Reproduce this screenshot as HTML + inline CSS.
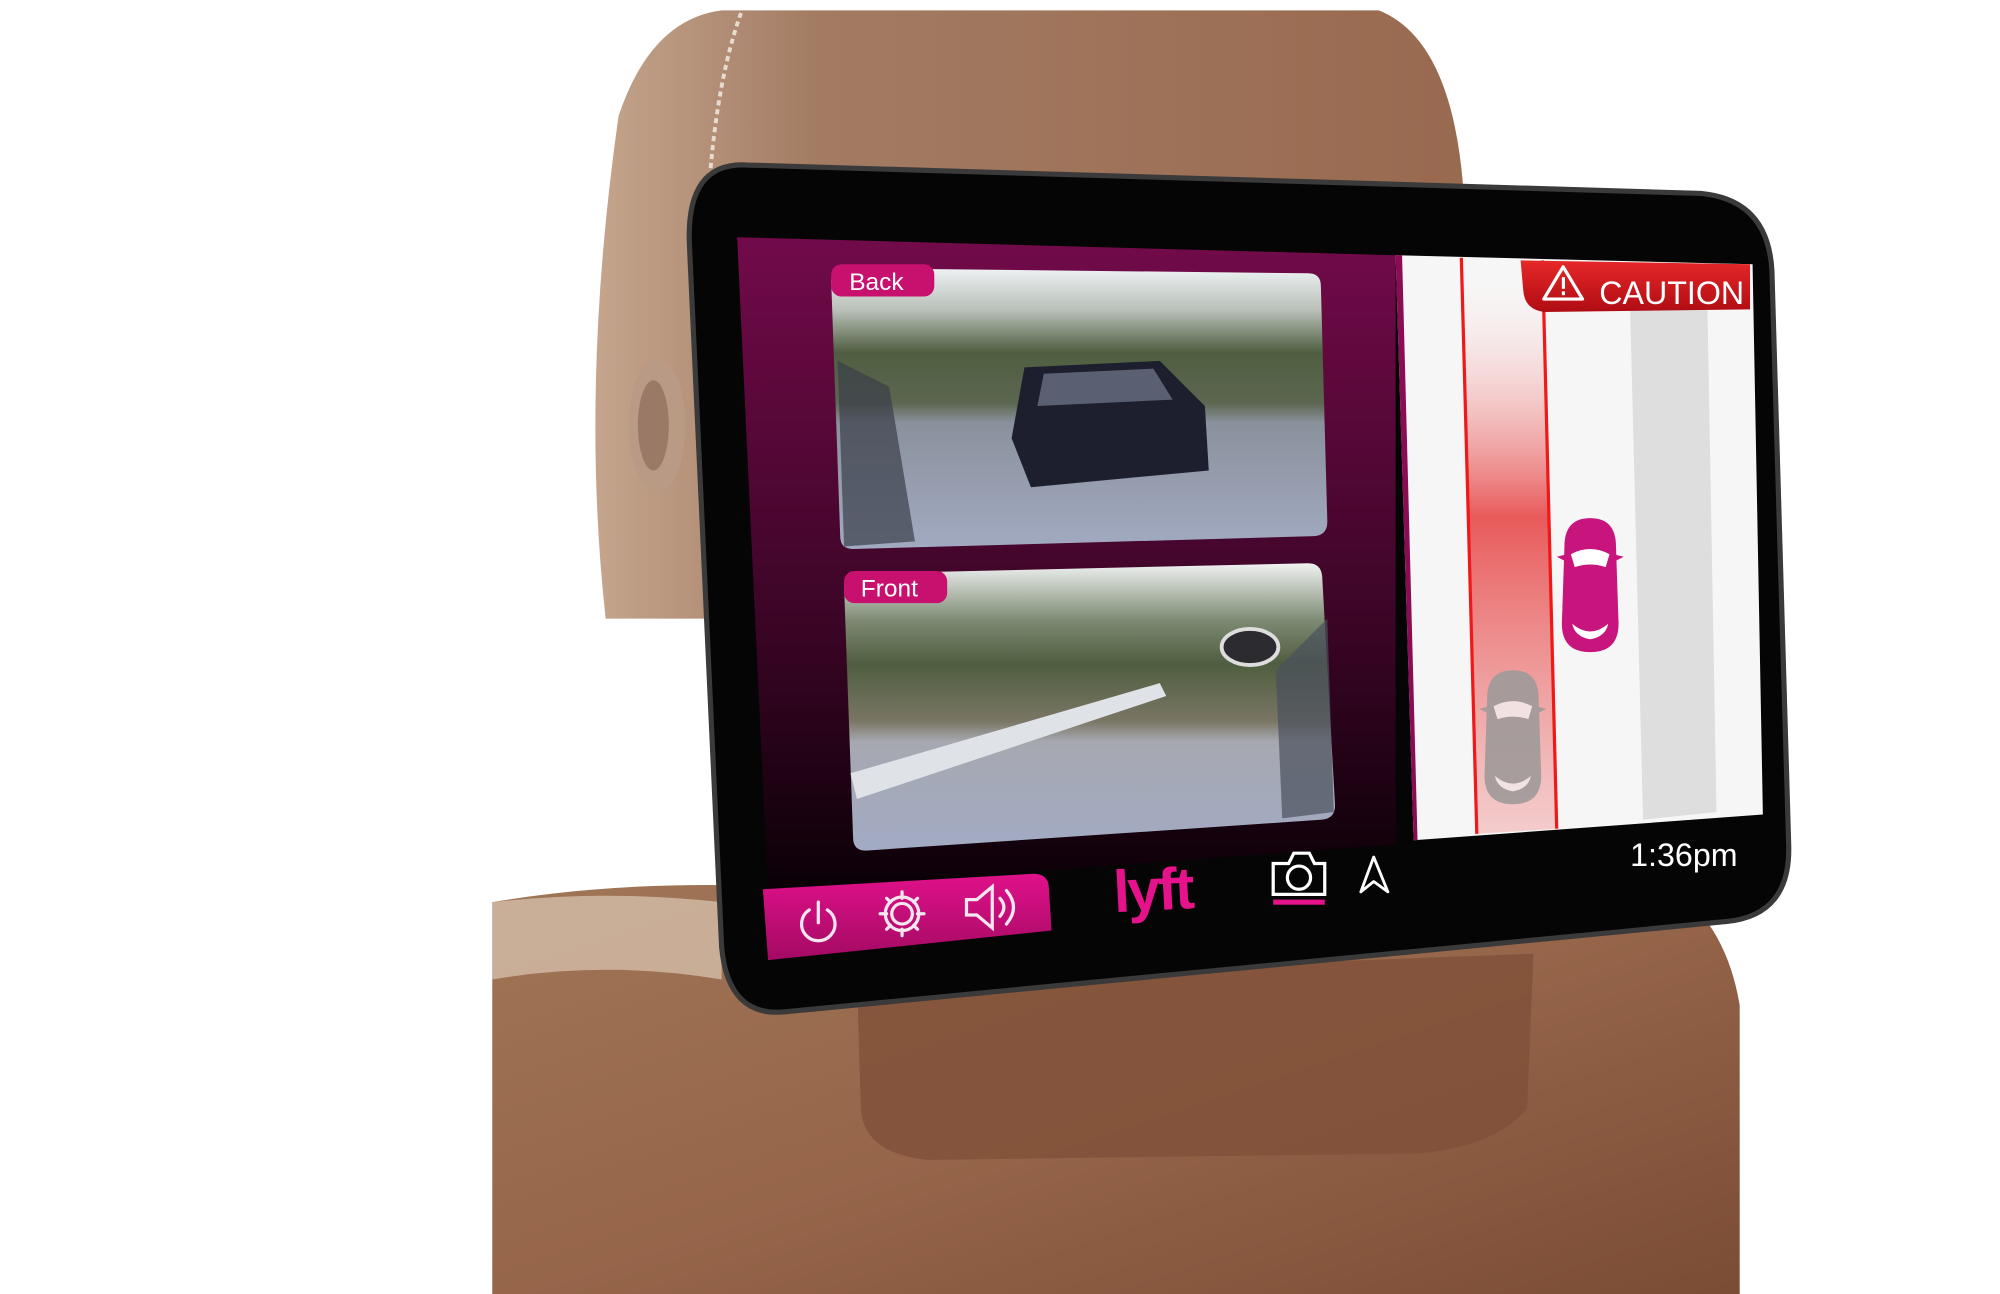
<!DOCTYPE html>
<html><head><meta charset="utf-8"><style>
html,body{margin:0;padding:0;background:#fff;width:2000px;height:1294px;overflow:hidden}
svg{display:block}
text{font-family:"Liberation Sans",sans-serif}
</style></head><body>
<svg width="2000" height="1294" viewBox="0 0 1552 1004" xmlns="http://www.w3.org/2000/svg">
<defs>
<linearGradient id="leather" x1="0" y1="0" x2="1" y2="1">
<stop offset="0" stop-color="#a07556"/><stop offset="0.5" stop-color="#96654a"/><stop offset="1" stop-color="#7a4c34"/></linearGradient>
<linearGradient id="head" x1="0" y1="0" x2="1" y2="0">
<stop offset="0" stop-color="#c5a58d"/><stop offset="0.25" stop-color="#a37b63"/><stop offset="1" stop-color="#98694f"/></linearGradient>
<linearGradient id="purp" x1="0" y1="0" x2="0" y2="1">
<stop offset="0" stop-color="#720a4a"/><stop offset="0.6" stop-color="#3a0525"/><stop offset="1" stop-color="#0a0006"/></linearGradient>
<linearGradient id="pinkbtn" x1="0" y1="0" x2="0" y2="1">
<stop offset="0" stop-color="#e0118a"/><stop offset="1" stop-color="#a30a63"/></linearGradient>
<linearGradient id="vid1" x1="0" y1="0" x2="0" y2="1">
<stop offset="0" stop-color="#eef2f4"/><stop offset="0.15" stop-color="#b8c0b8"/><stop offset="0.3" stop-color="#4f5e40"/><stop offset="0.48" stop-color="#5c6650"/><stop offset="0.55" stop-color="#8a919c"/><stop offset="1" stop-color="#a2aac2"/></linearGradient>
<linearGradient id="vid2" x1="0" y1="0" x2="0" y2="1">
<stop offset="0" stop-color="#f0f2f2"/><stop offset="0.2" stop-color="#7c8a72"/><stop offset="0.35" stop-color="#4f5e40"/><stop offset="0.55" stop-color="#7a7664"/><stop offset="0.62" stop-color="#a6a8b0"/><stop offset="1" stop-color="#a2abc4"/></linearGradient>
<linearGradient id="redlane" x1="0" y1="0" x2="0" y2="1">
<stop offset="0" stop-color="#fff" stop-opacity="0"/><stop offset="0.45" stop-color="#e85a5a"/><stop offset="1" stop-color="#f2b0b0" stop-opacity="0.6"/></linearGradient>
<linearGradient id="cau" x1="0" y1="0" x2="0" y2="1">
<stop offset="0" stop-color="#e62828"/><stop offset="1" stop-color="#b00c14"/></linearGradient>
</defs>
<!-- headrest -->
<path d="M560 8 L1070 8 Q1125 30 1135 140 L1150 480 L470 480 Q450 300 480 90 Q505 15 560 8Z" fill="url(#head)"/>
<path d="M575 10 Q550 80 548 200" stroke="#e8dccf" stroke-width="3" fill="none" stroke-dasharray="4 3"/>
<ellipse cx="510" cy="330" rx="22" ry="52" fill="#b89a85"/>
<ellipse cx="507" cy="330" rx="12" ry="35" fill="#9a7a66"/>
<!-- seat back -->
<path d="M382 700 Q500 680 640 690 L1300 690 Q1340 720 1350 780 L1350 1010 L382 1010Z" fill="url(#leather)"/>
<path d="M382 700 Q470 690 560 700 L560 760 Q470 745 382 760Z" fill="#dcc7b5" opacity="0.7"/>
<path d="M665 760 L1190 740 L1185 860 Q1160 890 1100 895 L720 900 Q670 895 668 860Z" fill="#7f5038" opacity="0.8"/>
<!-- tablet bezel -->
<path d="M580 128 L1320 150 Q1372 155 1375 210 L1388 655 Q1390 710 1340 715 L610 785 Q565 790 560 735 L535 190 Q532 125 580 128Z" fill="#050505" stroke="#3a3a3a" stroke-width="4"/>
<!-- left pane -->
<path d="M572 184 L1083 198 L1083 655 L596 692Z" fill="url(#purp)"/>
<!-- back video -->
<path d="M660 208 L1015 212 Q1025 212 1025 222 L1030 405 Q1030 415 1020 416 L662 426 Q652 426 652 416 L645 218 Q645 208 660 208Z" fill="url(#vid1)"/>
<path d="M795 285 L900 280 L935 315 L938 365 L800 378 L785 340Z" fill="#1e1f2e"/>
<path d="M810 290 L895 286 L910 310 L805 315Z" fill="#5a6072"/>
<path d="M650 280 L690 300 L710 420 L655 424Z" fill="#3a3f4a" opacity="0.7"/>
<rect x="645" y="205" width="80" height="25" rx="8" fill="#c8106e"/>
<text x="659" y="225" font-size="19" fill="#fff">Back</text>
<!-- front video -->
<path d="M668 445 L1015 437 Q1025 437 1026 447 L1036 625 Q1036 635 1026 636 L672 660 Q662 660 662 650 L655 455 Q655 445 668 445Z" fill="url(#vid2)"/>
<path d="M660 600 L900 530 L905 540 L665 620Z" fill="#dfe2e6"/>
<ellipse cx="970" cy="502" rx="22" ry="14" fill="#2c2c30" stroke="#ddd" stroke-width="3"/>
<path d="M990 520 L1030 480 L1035 630 L995 635Z" fill="#4a505c" opacity="0.7"/>
<rect x="655" y="443" width="80" height="25" rx="8" fill="#c8106e"/>
<text x="668" y="463" font-size="19" fill="#fff">Front</text>
<!-- right panel -->
<path d="M1083 198 L1360 205 L1368 632 L1097 652Z" fill="#f6f6f6"/>
<path d="M1083 198 L1088 198 L1100 652 L1097 652Z" fill="#8b0b55"/>
<path d="M1265 240 L1325 240 L1332 630 L1275 636Z" fill="#dedede"/>
<path d="M1134 200 L1197 202 L1208 643 L1146 647Z" fill="url(#redlane)"/>
<path d="M1134 200 L1146 647 M1197 202 L1208 643" stroke="#f01818" stroke-width="2.5" fill="none"/>
<path d="M1180 202 L1358 205 L1358 240 L1198 242 Q1183 240 1182 225Z" fill="url(#cau)"/>
<path d="M1213 207 L1228 232 L1198 232Z" fill="none" stroke="#fff" stroke-width="2.5" stroke-linejoin="round"/>
<rect x="1212" y="215" width="2.4" height="9" fill="#fff"/><rect x="1212" y="226" width="2.4" height="3" fill="#fff"/>
<text x="1241" y="236" font-size="25" fill="#fff">CAUTION</text>
<!-- pink car -->
<g transform="translate(1234 454)">
<path d="M-20 -30 Q-20 -52 0 -52 Q20 -52 20 -30 L22 30 Q22 52 0 52 Q-22 52 -22 30Z" fill="#c8157d"/>
<path d="M-26 -22 L-18 -24 L-18 -18Z M26 -22 L18 -24 L18 -18Z" fill="#c8157d"/>
<path d="M-15 -24 Q0 -32 15 -24 L12 -14 Q0 -18 -12 -14Z" fill="#fff"/>
<path d="M-14 30 Q0 42 14 30 Q12 40 0 42 Q-12 40 -14 30Z" fill="#fff"/>
</g>
<!-- gray car -->
<g transform="translate(1174 572)" opacity="0.9">
<path d="M-20 -30 Q-20 -52 0 -52 Q20 -52 20 -30 L22 30 Q22 52 0 52 Q-22 52 -22 30Z" fill="#a09a9a"/>
<path d="M-26 -22 L-18 -24 L-18 -18Z M26 -22 L18 -24 L18 -18Z" fill="#a09a9a"/>
<path d="M-15 -24 Q0 -32 15 -24 L12 -14 Q0 -18 -12 -14Z" fill="#f2e8e8"/>
<path d="M-14 30 Q0 42 14 30 Q12 40 0 42 Q-12 40 -14 30Z" fill="#f2e8e8"/>
</g>
<!-- bottom pink button group -->
<path d="M592 690 L802 678 Q814 678 814 690 L816 722 L596 745Z" fill="url(#pinkbtn)"/>
<g fill="none" stroke="#f5e6ef" stroke-width="2.5" stroke-linecap="round">
<path d="M628 706 A13 13 0 1 0 642 706"/><path d="M635 700 L635 716"/>
<circle cx="700" cy="709" r="8"/>
<path d="M700 692 L700 697 M700 721 L700 726 M683 709 L688 709 M712 709 L717 709 M688 697 L691 700 M709 718 L712 721 M688 721 L691 718 M709 700 L712 697"/>
<circle cx="700" cy="709" r="13"/>
<path d="M750 698 L758 698 L770 688 L770 720 L758 710 L750 710Z"/>
<path d="M776 697 Q782 704 776 711 M781 691 Q792 704 781 717"/>
</g>
<!-- lyft -->
<text x="864" y="706" font-size="46" font-weight="bold" fill="#e5128b" letter-spacing="-2" transform="rotate(-3 900 690)">lyft</text>
<!-- camera -->
<g fill="none" stroke="#fff" stroke-width="2.5">
<path d="M988 670 L1000 670 L1004 662 L1016 662 L1020 670 L1028 670 L1028 694 L988 694Z"/>
<circle cx="1008" cy="681" r="9"/>
</g>
<rect x="988" y="698" width="40" height="4" fill="#e5128b"/>
<path d="M1066 665 L1077 692 L1066 684 L1056 692Z" fill="none" stroke="#fff" stroke-width="2.2" stroke-linejoin="round"/>
<text x="1265" y="672" font-size="25" fill="#fff">1:36pm</text>
</svg>
</body></html>
